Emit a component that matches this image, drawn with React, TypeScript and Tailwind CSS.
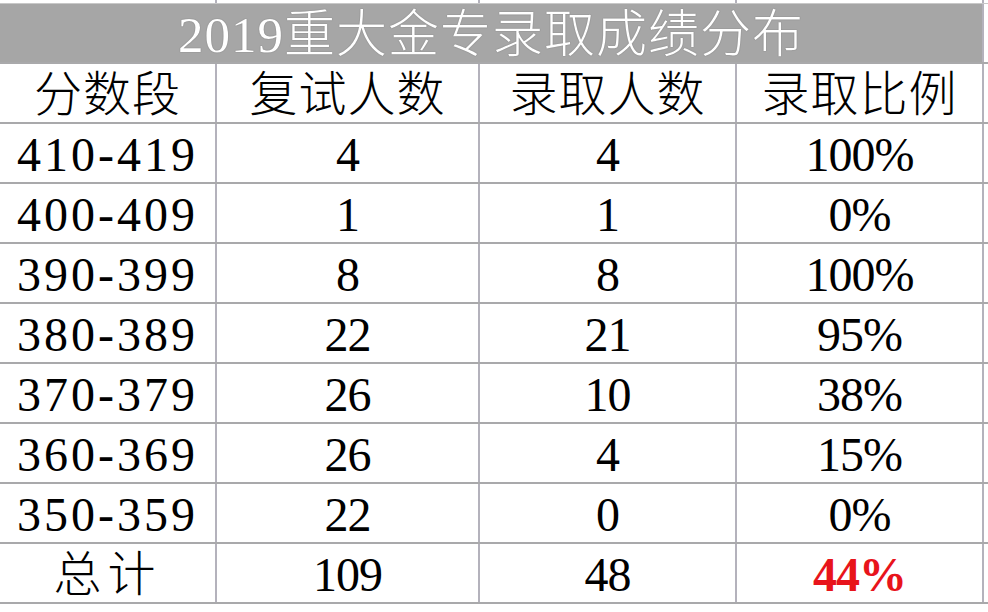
const rows = [
  ["410-419", "4", "4", "100%"],
  ["400-409", "1", "1", "0%"],
  ["390-399", "8", "8", "100%"],
  ["380-389", "22", "21", "95%"],
  ["370-379", "26", "10", "38%"],
  ["360-369", "26", "4", "15%"],
  ["350-359", "22", "0", "0%"],
]

const font = { fontFamily: '"Liberation Serif", "Noto Sans CJK SC", serif' }

function Row({ cells }: { cells: React.ReactNode[] }) {
  return (
    <div className="grid h-[60px] grid-cols-[217px_263px_257px_247px_1fr] border-b-2 border-[#a9a9ab]">
      {cells.map((c, i) => (
        <div
          key={i}
          className={`flex items-center justify-center border-r-2 border-[#b4b2bc] pt-1 text-[48px] leading-none text-black ${i === 0 ? "tracking-[3px]" : "tracking-[-1px]"}`}
        >
          {c}
        </div>
      ))}
      <div />
    </div>
  )
}

export default function App() {
  return (
    <div className="h-[612px] w-[988px] overflow-hidden bg-white" style={font}>
      <div className="grid h-[4px] grid-cols-[217px_263px_257px_247px_1fr] border-b border-[#c8c8c8]">
        <div className="border-r-2 border-[#b4b2bc]" />
        <div className="border-r-2 border-[#b4b2bc]" />
        <div className="border-r-2 border-[#b4b2bc]" />
        <div className="border-r-2 border-[#b4b2bc]" />
      </div>
      <div className="flex h-[60px] border-b-2 border-[#a9a9ab]">
        <div className="flex w-[984px] items-center justify-center border-r-2 border-[#b4b2bc] bg-[#a6a6a6] pt-1 text-[51px] leading-none tracking-[1px] text-white [text-shadow:0_0_1px_#555]">
          2019<span className="font-light">重大金专录取成绩分布</span>
        </div>
      </div>
      <Row
        cells={[
          <span className="font-light tracking-[1px]">分数段</span>,
          <span className="font-light tracking-[1px]">复试人数</span>,
          <span className="font-light tracking-[1px]">录取人数</span>,
          <span className="font-light tracking-[1px]">录取比例</span>,
        ]}
      />
      {rows.map((r) => (
        <Row key={r[0]} cells={r} />
      ))}
      <Row
        cells={[
          <span className="font-light tracking-[6px]">总计</span>,
          "109",
          "48",
          <span className="font-bold text-[#e8141b]">44%</span>,
        ]}
      />
    </div>
  )
}
